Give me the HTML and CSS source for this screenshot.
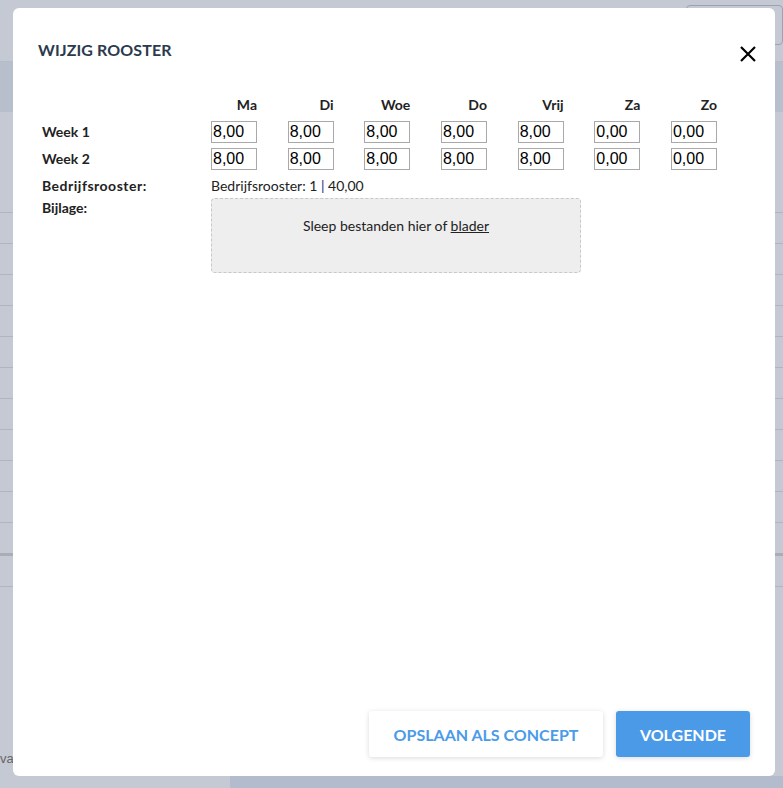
FILE: index.html
```html
<!DOCTYPE html>
<html lang="nl">
<head>
    <meta charset="UTF-8">
    <title>Wijzig rooster</title>
    <link rel="stylesheet" href="styles.css">
</head>
<body>

<!-- pagina achter de modal -->
<div class="page">
    <div class="page-top"><div class="page-select"></div></div>
    <div class="page-band"></div>
    <div class="page-rows">
        <div class="page-row tall"></div>
        <div class="page-row"></div>
        <div class="page-row"></div>
        <div class="page-row"></div>
        <div class="page-row"></div>
        <div class="page-row"></div>
        <div class="page-row"></div>
        <div class="page-row"></div>
        <div class="page-row"></div>
        <div class="page-row"></div>
        <div class="page-row"></div>
        <div class="page-row thick"></div>
        <div class="page-row"></div>
    </div>
    <div class="page-foot">va</div>
    <div class="page-bottom"><div class="page-bottom-dark"></div></div>
</div>

<div class="modal">
    <div class="modal-header">
        <h2>Wijzig rooster</h2>
        <button class="close" type="button" aria-label="Sluiten">
            <svg width="18" height="18" viewBox="0 0 18 18">
                <path d="M2 2 L16 16 M16 2 L2 16" stroke="#000" stroke-width="2.2" fill="none"/>
            </svg>
        </button>
    </div>

    <div class="modal-body">
        <div class="row head-row">
            <div class="row-label"></div>
            <div class="cells">
                <div class="day">Ma</div>
                <div class="day">Di</div>
                <div class="day">Woe</div>
                <div class="day">Do</div>
                <div class="day">Vrij</div>
                <div class="day">Za</div>
                <div class="day">Zo</div>
            </div>
        </div>

        <div class="row week-row">
            <div class="row-label">Week 1</div>
            <div class="cells">
                <input class="hours" value="8,00">
                <input class="hours" value="8,00">
                <input class="hours" value="8,00">
                <input class="hours" value="8,00">
                <input class="hours" value="8,00">
                <input class="hours" value="0,00">
                <input class="hours" value="0,00">
            </div>
        </div>

        <div class="row week-row">
            <div class="row-label">Week 2</div>
            <div class="cells">
                <input class="hours" value="8,00">
                <input class="hours" value="8,00">
                <input class="hours" value="8,00">
                <input class="hours" value="8,00">
                <input class="hours" value="8,00">
                <input class="hours" value="0,00">
                <input class="hours" value="0,00">
            </div>
        </div>

        <div class="row info-row">
            <div class="row-label wide">Bedrijfsrooster:</div>
            <div class="info-value">Bedrijfsrooster: 1 <span class="sep">|</span> 40,00</div>
        </div>

        <div class="row">
            <div class="row-label">Bijlage:</div>
            <div class="dropzone">Sleep bestanden hier of <a href="#">blader</a></div>
        </div>
    </div>

    <div class="modal-footer">
        <button class="btn btn-light" type="button">Opslaan als concept</button>
        <button class="btn btn-primary" type="button">Volgende</button>
    </div>
</div>

</body>
</html>
```

FILE: styles.css
```css
body {
    margin: 0;
    font-family: 'Lato', 'Open Sans', sans-serif;
    background-color: #c5c9d4;
    color: #222;
}

/* Achtergrondpagina */
.page {
    height: 788px;
    display: flex;
    flex-direction: column;
    overflow: hidden;
}

.page-top {
    height: 62px;
    display: flex;
    justify-content: flex-end;
    border-bottom: 1px solid #b6bcc8;
    box-sizing: border-box;
}

.page-select {
    width: 95px;
    height: 38px;
    margin-top: 5px;
    border: 1px solid #9aa3b3;
    border-radius: 4px;
}

.page-band {
    height: 50px;
    background-color: #b7bfcd;
}

.page-rows {
    flex: 1;
}

.page-row {
    height: 30px;
    border-bottom: 1px solid #b0b5bf;
}

.page-row.tall {
    height: 100px;
}

.page-row.thick {
    border-bottom: 3px solid #a8adb6;
}

.page-foot {
    font-family: 'Liberation Sans', Arial, sans-serif;
    font-size: 13px;
    color: #666;
    padding: 0 0 10px 0;
}

.page-bottom {
    height: 12px;
    display: flex;
    justify-content: flex-end;
}

.page-bottom-dark {
    width: 553px;
    background-color: #b3bccd;
}

/* Modal */
.modal {
    position: fixed;
    left: 13px;
    top: 8px;
    width: 762px;
    height: 768px;
    background-color: #fff;
    border-radius: 6px;
    box-sizing: border-box;
    display: flex;
    flex-direction: column;
    padding: 32px 25px 19px 29px;
}

.modal-header {
    display: flex;
    justify-content: space-between;
    align-items: flex-start;
}

.modal-header h2 {
    margin: 0 0 0 -4px;
    font-size: 16px;
    line-height: 20px;
    font-weight: 700;
    text-transform: uppercase;
    color: #2b3a4e;
    letter-spacing: 0.1px;
}

.close {
    border: none;
    background: none;
    padding: 0;
    margin: 5px -7px 0 0;
    cursor: pointer;
    line-height: 0;
}

.modal-body {
    flex: 1;
    margin-top: 32px;
}

.row {
    display: flex;
    align-items: flex-start;
}

.row-label {
    width: 169px;
    flex-shrink: 0;
    font-size: 14px;
    font-weight: 700;
    line-height: 20px;
}

.row-label.wide {
    letter-spacing: 0.5px;
}

.cells {
    display: grid;
    grid-template-columns: repeat(7, 76.67px);
}

.head-row .day {
    width: 46px;
    text-align: right;
    font-size: 14px;
    font-weight: 700;
    line-height: 20px;
}

.week-row {
    align-items: center;
    margin-top: 5px;
}

.head-row + .week-row {
    margin-top: 6px;
}

.hours {
    width: 46px;
    height: 22px;
    box-sizing: border-box;
    border: 1px solid #a9a9a9;
    padding: 0 1px;
    font-family: 'Liberation Sans', Arial, sans-serif;
    font-size: 16px;
    color: #000;
    background: #fff;
}

.info-row {
    margin-top: 6px;
    margin-bottom: 2px;
}

.info-value {
    font-size: 14px;
    line-height: 20px;
}

.sep {
    color: #1d2a7a;
}

.dropzone {
    width: 370px;
    height: 75px;
    box-sizing: border-box;
    background-color: #eeeeee;
    border: 1px dashed #c8c8c8;
    border-radius: 4px;
    text-align: center;
    font-size: 14px;
    padding-top: 18px;
}

.dropzone a {
    color: #222;
    text-decoration: underline;
}

.modal-footer {
    display: flex;
    justify-content: flex-end;
    gap: 13px;
}

.btn {
    height: 46px;
    border: none;
    border-radius: 3px;
    font-family: 'Lato', 'Open Sans', sans-serif;
    font-size: 16px;
    font-weight: 700;
    text-transform: uppercase;
    cursor: pointer;
    box-shadow: 0 1px 5px rgba(0, 0, 0, 0.15);
}

.btn-light {
    width: 234px;
    background-color: #fff;
    color: #4a9be8;
}

.btn-primary {
    width: 134px;
    background-color: #4a9ae8;
    color: #fff;
}
```
